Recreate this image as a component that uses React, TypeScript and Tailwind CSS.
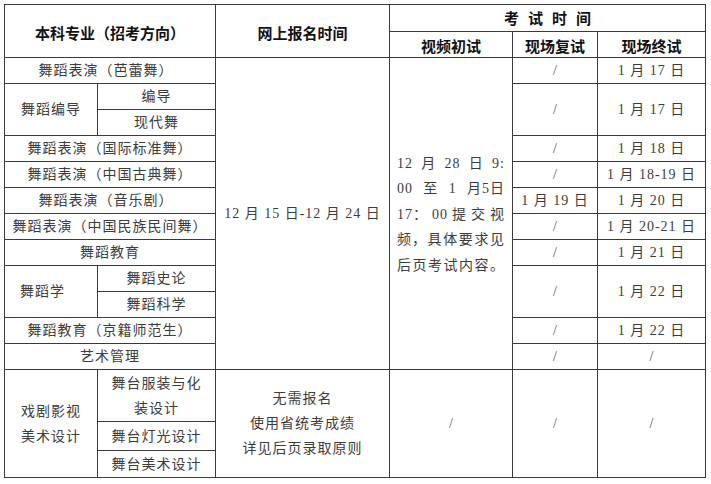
const body = "'Liberation Serif', 'Noto Sans CJK SC', serif";
const head = "'Noto Sans CJK SC', 'Liberation Sans', sans-serif";

const td = "border border-[#3a3a3a] p-0 text-center align-middle leading-[25px] tracking-[1px] text-[14px] text-[#3c3c3c] font-normal";
const th = "border border-[#3a3a3a] p-0 text-center align-middle leading-[22px] text-[15px] font-bold text-[#111]";

function Slash() {
  return <span className="text-[#555] tracking-normal">/</span>;
}

const videoLines: string[][] = [
  ["12", "月", "28", "日", "9:"],
  ["00", "至", "1", "月5日"],
  ["17：", "00", "提", "交", "视"],
  ["频，", "具", "体", "要", "求", "见"],
  ["后", "页", "考", "试", "内", "容", "。"],
];

export default function App() {
  return (
    <div className="w-[711px] h-[484px] bg-white pt-[4px] pl-[4px]" style={{ fontFamily: body }}>
      <table className="w-[701px] table-fixed border-collapse">
        <colgroup>
          <col className="w-[93px]" />
          <col className="w-[118px]" />
          <col className="w-[174px]" />
          <col className="w-[123px]" />
          <col className="w-[85px]" />
          <col className="w-[108px]" />
        </colgroup>
        <thead style={{ fontFamily: head }}>
          <tr className="h-[27px]">
            <th colSpan={2} rowSpan={2} className={`${th} pt-[4px]`}>本科专业（招考方向）</th>
            <th rowSpan={2} className={`${th} pt-[4px]`}>网上报名时间</th>
            <th colSpan={3} className={th}>
              <div className="flex justify-center gap-[9px]">
                <span>考</span><span>试</span><span>时</span><span>间</span>
              </div>
            </th>
          </tr>
          <tr className="h-[26px]">
            <th className={`${th} pt-[3px]`}>视频初试</th>
            <th className={`${th} pt-[3px]`}>现场复试</th>
            <th className={`${th} pt-[3px]`}>现场终试</th>
          </tr>
        </thead>
        <tbody>
          <tr className="h-[26px]">
            <td colSpan={2} className={`${td} pr-[8px]`}>舞蹈表演（芭蕾舞）</td>
            <td rowSpan={12} className={`${td} tracking-[0.5px]`}>12 月 15 日-12 月 24 日</td>
            <td rowSpan={12} className={`${td} px-[7px] pt-[2px]`}>
              {videoLines.map((line, i) => (
                <div key={i} className="flex justify-between leading-[25.4px]">
                  {line.map((t, j) => (
                    <span key={j}>{t}</span>
                  ))}
                </div>
              ))}
            </td>
            <td className={td}><Slash /></td>
            <td className={td}>1 月 17 日</td>
          </tr>
          <tr className="h-[26px]">
            <td rowSpan={2} className={td}>舞蹈编导</td>
            <td className={td}>编导</td>
            <td rowSpan={2} className={td}><Slash /></td>
            <td rowSpan={2} className={td}>1 月 17 日</td>
          </tr>
          <tr className="h-[26px]">
            <td className={td}>现代舞</td>
          </tr>
          <tr className="h-[26px]">
            <td colSpan={2} className={td}>舞蹈表演（国际标准舞）</td>
            <td className={td}><Slash /></td>
            <td className={td}>1 月 18 日</td>
          </tr>
          <tr className="h-[26px]">
            <td colSpan={2} className={td}>舞蹈表演（中国古典舞）</td>
            <td className={td}><Slash /></td>
            <td className={td}>1 月 18-19 日</td>
          </tr>
          <tr className="h-[26px]">
            <td colSpan={2} className={`${td} pr-[8px]`}>舞蹈表演（音乐剧）</td>
            <td className={td}>1 月 19 日</td>
            <td className={td}>1 月 20 日</td>
          </tr>
          <tr className="h-[26px]">
            <td colSpan={2} className={`${td} tracking-[0.6px]`}>舞蹈表演（中国民族民间舞）</td>
            <td className={td}><Slash /></td>
            <td className={td}>1 月 20-21 日</td>
          </tr>
          <tr className="h-[26px]">
            <td colSpan={2} className={td}>舞蹈教育</td>
            <td className={td}><Slash /></td>
            <td className={td}>1 月 21 日</td>
          </tr>
          <tr className="h-[26px]">
            <td rowSpan={2} className={`${td} text-left pl-[15px]`}>舞蹈学</td>
            <td className={td}>舞蹈史论</td>
            <td rowSpan={2} className={td}><Slash /></td>
            <td rowSpan={2} className={td}>1 月 22 日</td>
          </tr>
          <tr className="h-[26px]">
            <td className={td}>舞蹈科学</td>
          </tr>
          <tr className="h-[26px]">
            <td colSpan={2} className={td}>舞蹈教育（京籍师范生）</td>
            <td className={td}><Slash /></td>
            <td className={td}>1 月 22 日</td>
          </tr>
          <tr className="h-[26px]">
            <td colSpan={2} className={td}>艺术管理</td>
            <td className={td}><Slash /></td>
            <td className={td}><Slash /></td>
          </tr>
          <tr className="h-[52px]">
            <td rowSpan={3} className={td}>戏剧影视<br />美术设计</td>
            <td className={td}>舞台服装与化<br />装设计</td>
            <td rowSpan={3} className={`${td} tracking-[0.5px]`}>无需报名<br />使用省统考成绩<br />详见后页录取原则</td>
            <td rowSpan={3} className={td}><Slash /></td>
            <td rowSpan={3} className={td}><Slash /></td>
            <td rowSpan={3} className={td}><Slash /></td>
          </tr>
          <tr className="h-[29px]">
            <td className={td}>舞台灯光设计</td>
          </tr>
          <tr className="h-[27px]">
            <td className={td}>舞台美术设计</td>
          </tr>
        </tbody>
      </table>
    </div>
  );
}
